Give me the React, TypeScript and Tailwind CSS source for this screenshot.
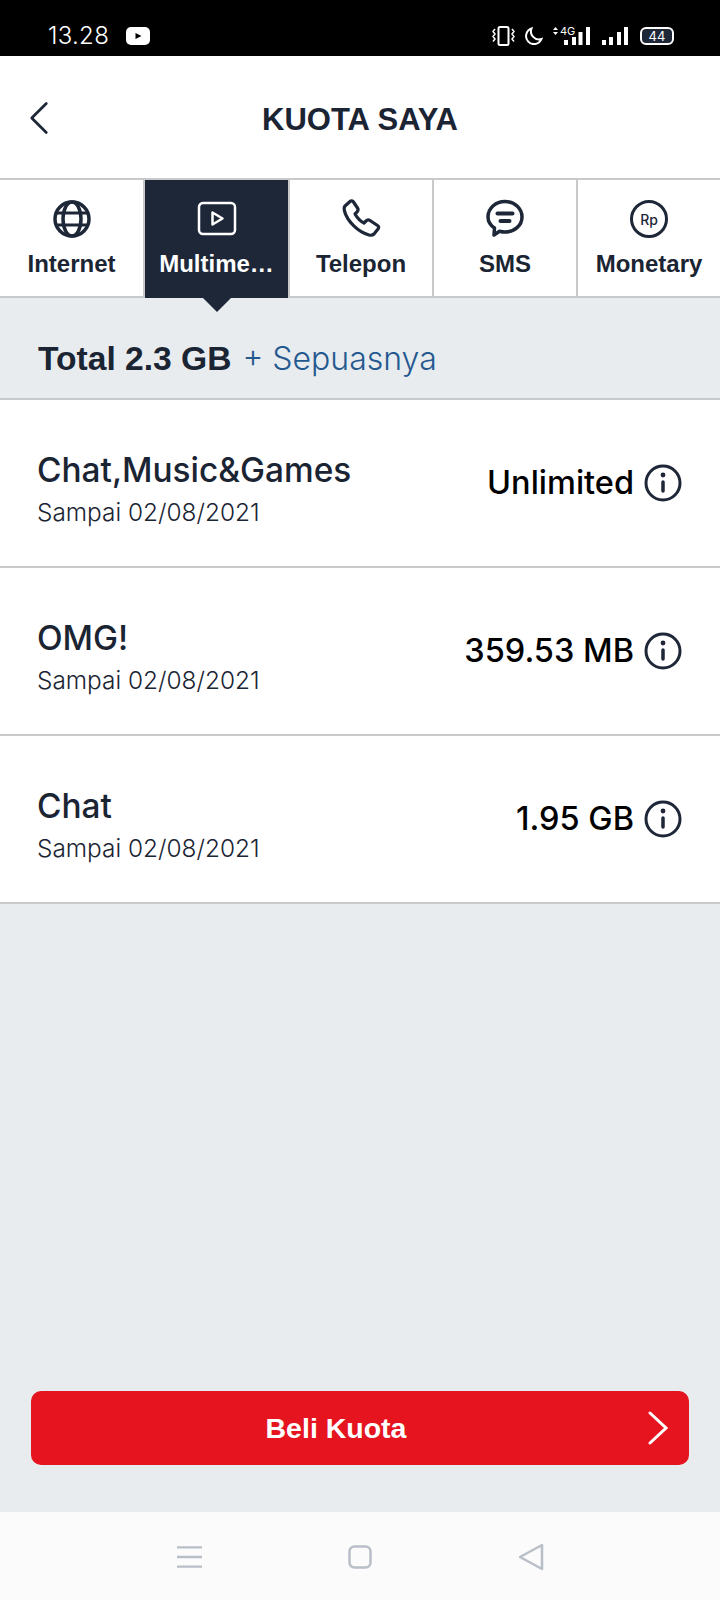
const items = [
  { name: "Chat,Music&Games", value: "Unlimited" },
  { name: "OMG!", value: "359.53 MB" },
  { name: "Chat", value: "1.95 GB" },
];

function InfoIcon() {
  return (
    <svg viewBox="0 0 38 38" className="w-[38px] h-[38px] shrink-0" fill="none" stroke="#1e2738">
      <circle cx="19" cy="19" r="17" strokeWidth="3" />
      <path d="M19 18v9" strokeWidth="3.500" strokeLinecap="round" />
      <circle cx="19" cy="11" r="2.400" fill="#1e2738" stroke="none" />
    </svg>
  );
}

function StatusBar() {
  return (
    <div className="h-14 shrink-0 bg-black flex items-center justify-between pl-12 pr-[46px] pt-[16px] text-white">
      <div className="flex items-center gap-[17px]">
        <span className="font-['Inter',sans-serif] font-light text-[24px] leading-none tracking-[0.3px]">13.28</span>
        <svg viewBox="0 0 24 18" className="w-6 h-[18px]">
          <rect width="24" height="18" rx="5" fill="#fff" />
          <path d="M9.500 6l6 3-6 3z" fill="#000" />
        </svg>
      </div>
      <div className="flex items-center">
        <svg viewBox="0 0 23 20" className="w-[23px] h-5 mr-[10px]" fill="none" stroke="#fff" strokeWidth="1.500">
          <rect x="6.500" y="1" width="10" height="18" rx="1.500" strokeWidth="2" />
          <path d="M3 3L1 5.500l2 2.500-2 2.500 2 2.500-2 2.500M20 3l2 2.500L20 8l2 2.500L20 13l2 2.500" />
        </svg>
        <svg viewBox="0 0 18 18" className="w-[18px] h-[18px] mr-[10px]" fill="none" stroke="#fff" strokeWidth="2">
          <path d="M6.500 1.500a8 8 0 1 0 10 10.500A8 8 0 0 1 6.500 1.500z" />
        </svg>
        <div className="relative w-[37px] h-5 mr-[12px]">
          <svg viewBox="0 0 37 20" className="w-[37px] h-5" fill="#fff">
            <path d="M2.500 1l2.500 3H0zM2.500 9L0 6h5z" />
            <rect x="11" y="14" width="4" height="5" />
            <rect x="19" y="11" width="4" height="8" />
            <rect x="25.500" y="6" width="4" height="13" />
            <rect x="33" y="1" width="4" height="18" />
          </svg>
          <span className="absolute left-[7px] top-0 text-[11px] leading-[11px] font-['Inter',sans-serif]">4G</span>
        </div>
        <svg viewBox="0 0 26 20" className="w-[26px] h-5 mr-[12px]" fill="#fff">
          <rect x="0" y="14" width="4" height="5" />
          <rect x="7" y="11" width="4" height="8" />
          <rect x="15" y="6" width="4" height="13" />
          <rect x="22" y="1" width="4" height="18" />
        </svg>
        <div className="w-[34px] h-[18px] rounded-[6px] border-2 border-white bg-[#1e2738] flex items-center justify-center text-[13px] leading-none font-['Inter',sans-serif]">44</div>
      </div>
    </div>
  );
}

const iconCls = "w-10 h-10";

const tabs = [
  {
    label: "Internet",
    width: "w-[145px]",
    icon: (
      <svg viewBox="0 0 40 40" className={iconCls} fill="none" stroke="#1e2738" strokeWidth="3.500">
        <circle cx="20" cy="20" r="17" />
        <ellipse cx="20" cy="20" rx="9" ry="17" />
        <path d="M5 14h30M5 26h30" strokeWidth="3" />
      </svg>
    ),
  },
  {
    label: "Multime…",
    width: "w-[145px]",
    active: true,
    icon: (
      <svg viewBox="0 0 40 40" className={iconCls} fill="none" stroke="#fff" strokeWidth="2.500" strokeLinejoin="round">
        <rect x="2" y="4" width="36" height="31" rx="4" />
        <path d="M15.500 13.500v12l10-6z" />
      </svg>
    ),
  },
  {
    label: "Telepon",
    width: "w-[144px]",
    icon: (
      <svg viewBox="0 0 40 40" className={iconCls} fill="none" stroke="#1e2738" strokeWidth="3.200" strokeLinejoin="round">
        <path d="M9 2.500L4 7c-1 1-1 3-.5 5C6 22 17 33 28 36c2 .5 4 0 5-1l4-5c1-1 1-2.500-.5-3.500l-7.500-5c-1.500-1-3-.5-4 .5l-2 2c-4-2-7-5.500-9-9l2-2c1-1 1.500-2.500.5-4l-4-6c-1-1.500-2.500-1.500-3.500-.5z" />
      </svg>
    ),
  },
  {
    label: "SMS",
    width: "w-[144px]",
    icon: (
      <svg viewBox="0 0 40 40" className={iconCls} fill="none" stroke="#1e2738" strokeWidth="3.500" strokeLinejoin="round">
        <path d="M20 2.500c9.500 0 17 7 17 15.500s-7.500 15-17 15c-2 0-3.500-.3-5.500-.8L9 36l.5-7C5 26 3 22.500 3 18 3 9.500 10.500 2.500 20 2.500z" />
        <path d="M12.500 14.500h15" strokeWidth="4" strokeLinecap="round" />
        <path d="M15.500 22h9" strokeWidth="4" strokeLinecap="round" />
      </svg>
    ),
  },
  {
    label: "Monetary",
    width: "flex-1",
    icon: (
      <div className="w-[38px] h-[38px] my-px rounded-full border-[3.500px] border-[#1e2738] flex items-center justify-center text-[14px] font-medium text-[#1e2738] font-['Inter',sans-serif]">
        Rp
      </div>
    ),
  },
];

export default function App() {
  return (
    <div className="w-[720px] h-[1600px] flex flex-col bg-[#e9ecef] font-['Liberation_Sans',sans-serif] text-[#1a2433]">
      <StatusBar />

      {/* Header */}
      <div className="h-[122px] shrink-0 bg-white relative flex items-center justify-center pt-[4px]">
        <svg viewBox="0 0 22 36" className="absolute left-[29px] top-[44px] w-[20px] h-[36px]" fill="none" stroke="#1e2738" strokeWidth="3" strokeLinecap="round" strokeLinejoin="round">
          <path d="M19 2L3 18l16 16" />
        </svg>
        <h1 className="text-[31px] font-bold leading-none">KUOTA SAYA</h1>
      </div>

      {/* Tabs */}
      <div className="h-[120px] shrink-0 flex bg-white border-y-2 border-[#c8c9cb]">
        {tabs.map((t) => (
          <div
            key={t.label}
            className={
              t.width +
              (t.active
                ? " relative -mb-[2px] flex flex-col items-center pt-[19px] bg-[#1e2738] text-white border-r-2 border-[#c8c9cb]"
                : " flex flex-col items-center pt-[19px] border-r-2 border-[#c8c9cb] last:border-r-0")
            }
          >
            {t.icon}
            <span className="mt-[11px] text-[24px] font-bold leading-7 whitespace-nowrap">{t.label}</span>
            {t.active && (
              <div className="absolute -bottom-[14px] left-1/2 -translate-x-1/2 w-0 h-0 border-x-[14px] border-x-transparent border-t-[14px] border-t-[#1e2738]" />
            )}
          </div>
        ))}
      </div>

      {/* Total */}
      <div className="h-[102px] shrink-0 flex items-center pl-[38px] pt-[22px] border-b-2 border-[#c8c9cb]">
        <span className="text-[33.600px] font-bold leading-none">Total 2.3 GB</span>
        <span className="ml-[11px] font-['Inter',sans-serif] font-light text-[32px] leading-none text-[#24598f]">+ Sepuasnya</span>
      </div>

      {/* Rows */}
      {items.map((item) => (
        <div key={item.name} className="h-[168px] shrink-0 bg-white border-b-2 border-[#c8c9cb] flex items-center justify-between pl-[37px] pr-[38px]">
          <div className="pt-[12px]">
            <div className="font-['Inter',sans-serif] font-medium text-[33.400px] leading-[38px]">{item.name}</div>
            <div className="mt-[8px] font-['Inter',sans-serif] font-light text-[24.400px] leading-[30px]">Sampai 02/08/2021</div>
          </div>
          <div className="flex items-center gap-[10px] text-black">
            <span className="font-['Inter',sans-serif] font-medium text-[32.500px] leading-none">{item.value}</span>
            <InfoIcon />
          </div>
        </div>
      ))}

      {/* Buy button */}
      <div className="mt-auto px-[31px] pb-[47px]">
        <div className="relative h-[74px] rounded-[10px] bg-[#e5141f] flex items-center justify-center pr-[48px] text-white">
          <span className="text-[28.500px] font-bold leading-none">Beli Kuota</span>
          <svg viewBox="0 0 20 34" className="absolute right-[21px] top-[20px] w-5 h-[34px]" fill="none" stroke="#fff" strokeWidth="3" strokeLinecap="round">
            <path d="M2 2l16 15L2 32" />
          </svg>
        </div>
      </div>

      {/* Android nav */}
      <div className="h-[88px] shrink-0 bg-[#fbfbfc] flex items-center pt-[2px]">
        <div className="w-full flex items-center justify-center gap-[146px]">
          <svg viewBox="0 0 26 24" className="w-[25px] h-6" stroke="#b9bfc7" strokeWidth="2.500">
            <path d="M0 2h26M0 12h26M0 22h26" />
          </svg>
          <svg viewBox="0 0 24 24" className="w-6 h-6" fill="none" stroke="#b9bfc7" strokeWidth="2.500">
            <rect x="1.500" y="1.500" width="21" height="21" rx="5" />
          </svg>
          <svg viewBox="0 0 26 28" className="w-[26px] h-7" fill="none" stroke="#b9bfc7" strokeWidth="2.500" strokeLinejoin="round">
            <path d="M24 2v24L2 14z" />
          </svg>
        </div>
      </div>
    </div>
  );
}
